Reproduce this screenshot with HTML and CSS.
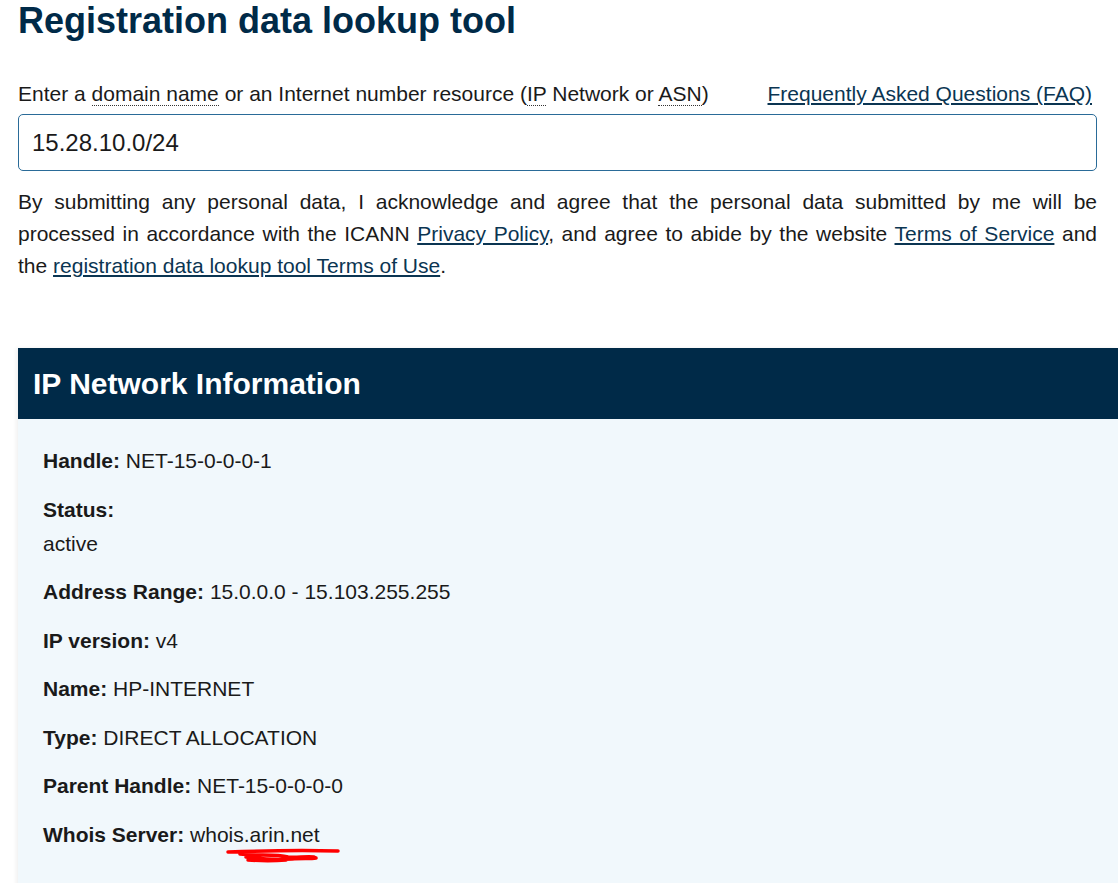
FILE: index.html
```html
<!DOCTYPE html>
<html lang="en">
<head>
<meta charset="utf-8">
<title>Registration data lookup tool</title>
<link rel="stylesheet" href="styles.css">
</head>
<body>
<main class="page">
  <h1 class="title">Registration data lookup tool</h1>
  <div class="label-row">
    <label class="label" for="q">Enter a <abbr class="dotted">domain name</abbr> or an Internet number resource (<abbr class="dotted">IP</abbr> Network or <abbr class="dotted">ASN</abbr>)</label>
    <a class="link" href="#">Frequently Asked Questions (FAQ)</a>
  </div>
  <input id="q" class="search" type="text" value="15.28.10.0/24">
  <p class="consent">By submitting any personal data, I acknowledge and agree that the personal data submitted by me will be processed in accordance with the ICANN <a class="link" href="#">Privacy Policy</a>, and agree to abide by the website <a class="link" href="#">Terms of Service</a> and the <a class="link" href="#">registration data lookup tool Terms of Use</a>.</p>

  <section class="card">
    <h2 class="card-head">IP Network Information</h2>
    <div class="card-body">
      <p class="field"><b>Handle:</b> NET-15-0-0-0-1</p>
      <div class="field"><b>Status:</b><div class="sub">active</div></div>
      <p class="field"><b>Address Range:</b> 15.0.0.0 - 15.103.255.255</p>
      <p class="field"><b>IP version:</b> v4</p>
      <p class="field"><b>Name:</b> HP-INTERNET</p>
      <p class="field"><b>Type:</b> DIRECT ALLOCATION</p>
      <p class="field"><b>Parent Handle:</b> NET-15-0-0-0-0</p>
      <p class="field"><b>Whois Server:</b> <span class="marked">whois.arin.net<svg class="scribble" width="116" height="22" viewBox="0 0 116 22"><path d="M2 4 C30 3 70 2 112 3 M14 6 C30 8 50 6 62 9 C70 10 80 8 88 9 M20 9 C34 11 50 12 66 11 C76 10 84 11 90 10 M22 12 C36 13 48 13 60 12" fill="none" stroke="#ff0000" stroke-width="3.5" stroke-linecap="round"/></svg></span></p>
    </div>
  </section>
</main>
</body>
</html>
```

FILE: styles.css
```css
html, body {
  margin: 0;
  padding: 0;
  background: #ffffff;
  overflow-x: hidden;
}

body {
  font-family: "Liberation Sans", Arial, sans-serif;
  color: #1a1a1a;
  font-size: 21px;
}

.page {
  padding: 0 21px 0 18px;
}

.title {
  margin: 0;
  padding-top: 1px;
  font-size: 36px;
  line-height: 40px;
  font-weight: 700;
  color: #002a48;
}

.label-row {
  display: flex;
  justify-content: space-between;
  align-items: baseline;
  margin-top: 39px;
  padding-right: 5px;
  line-height: 28px;
}

.label {
  color: #1a1a1a;
}

.dotted {
  text-decoration: none;
  border-bottom: 1px dotted #333;
}

.link {
  color: #0b3552;
  text-decoration: underline;
  text-underline-offset: 2px;
}

.search {
  display: block;
  box-sizing: border-box;
  width: 100%;
  height: 57px;
  margin-top: 6px;
  padding: 0 13px;
  border: 1px solid #2a6b98;
  border-radius: 5px;
  font-family: "Liberation Sans", Arial, sans-serif;
  font-size: 24px;
  color: #1a1a1a;
  background: #fff;
}

.consent {
  margin: 15px 0 0;
  line-height: 32px;
  text-align: justify;
}

.card {
  margin: 66px -21px 0 0;
  background: #f1f8fc;
  box-shadow: -2px 0 4px rgba(0, 0, 0, 0.06);
}

.card-head {
  margin: 0;
  height: 71px;
  padding: 0 15px;
  display: flex;
  align-items: center;
  background: #002a48;
  color: #ffffff;
  font-size: 30px;
  font-weight: 700;
}

.card-body {
  padding: 28px 25px 40px;
}

.field {
  margin: 0 0 20.5px;
  line-height: 28px;
}

.field b {
  font-weight: 700;
}

.sub {
  margin-top: 6px;
}

.marked {
  position: relative;
}

.scribble {
  position: absolute;
  left: 36px;
  top: 25px;
}
```
